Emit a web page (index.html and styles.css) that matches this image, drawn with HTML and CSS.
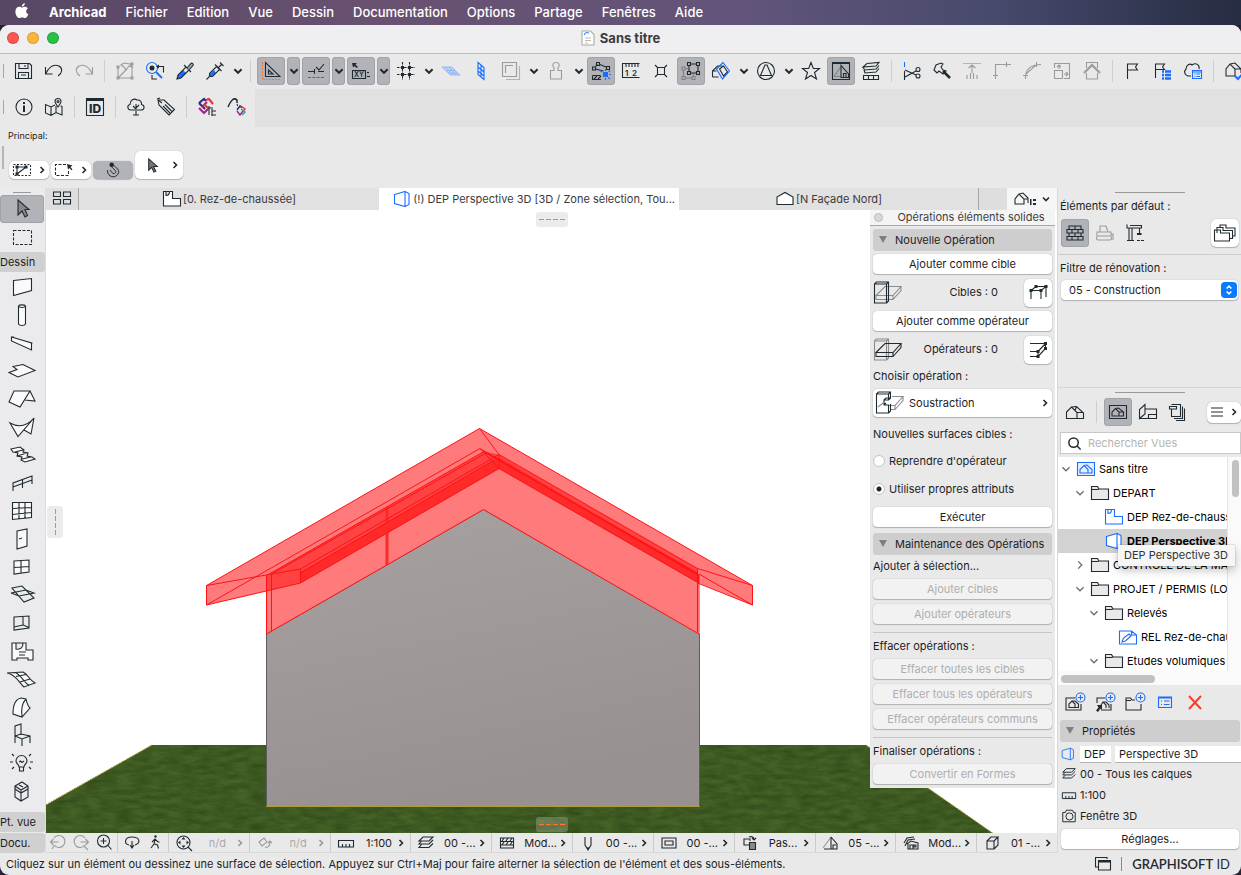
FILE: index.html
```html
<!DOCTYPE html>
<html lang="fr">
<head>
    <meta charset="UTF-8">
    <meta name="viewport" content="width=device-width, initial-scale=1.0">
    <title>Sans titre - Archicad</title>
    <link rel="stylesheet" href="styles.css">
</head>
<body>
    <!-- Icônes réutilisées -->
    <svg class="sprite" aria-hidden="true">
        <symbol id="down" viewBox="0 0 10 10"><path d="M2 3.500l3 3 3-3"/></symbol>
        <symbol id="right" viewBox="0 0 10 10"><path d="M3.500 2l3 3-3 3"/></symbol>
        <symbol id="folder" viewBox="0 0 20 18"><path d="M1.500 2.500h6l1.500 2.500h9.500v10.500H1.500z" fill="#e9e9e9"/><path d="M1.500 5.500h6l1.500-.5"/></symbol>
        <symbol id="layers" viewBox="0 0 18 18"><path d="M6 3h10l-4 4H2zM4.500 7L2 10h10l4-4M4.500 10.500L2 13.500h10l4-4"/></symbol>
        <symbol id="ruler" viewBox="0 0 18 18"><path d="M1.500 6.500h15v6.500h-15zM5.500 10v3M9 10v3M12.500 10v3"/></symbol>
        <symbol id="persp" viewBox="0 0 18 18"><path d="M1.500 4.500L12 1.500v15L1.500 13.500zM12 1.500l4 2v11l-4 2"/></symbol>
        <symbol id="plan" viewBox="0 0 20 18"><path d="M1.500 1.500h9v7h8v7.500h-17zM4 1.500v4c2 0 3.500-1.500 3.500-4"/></symbol>
        <symbol id="house" viewBox="0 0 20 20"><path d="M1.500 16.500V10l5-5 5.500 5.500v6zM6.500 5l5-.5 7 6.500v5.500H12M12 10.500h6.500M10 8.500l1.500-4"/></symbol>
        <symbol id="layout" viewBox="0 0 20 20"><path d="M1.500 16.500v-9l5.500-5v9.500zM7 6h0M7 7h11.500v9.500h-17M10.500 16.500v-4h8"/></symbol>
        <symbol id="cubeA" viewBox="0 0 30 26"><path d="M1.500 4h12v19h-12zM1.500 4l2-2h12v19l-2 2M13.500 4l2-2"/></symbol>
        <symbol id="slab" viewBox="0 0 30 26"><path d="M3 15.500L12 6.500h16l-8 9zM3 15.500v4h17v-4M20 19.500l8-9v-4"/></symbol>
    </svg>

    <header class="menubar">
        <svg class="apple" viewBox="0 0 16 18"><path d="M8 5c1-.6 2-1 3.200-.9 1.300.1 2.300.7 2.900 1.600-2.500 1.600-2.100 5 .6 6.100-.6 1.800-2 4.200-3.500 4.200-1.100 0-1.600-.7-3-.7s-1.900.7-3 .7C3.100 16 1 12.400 1 9.200 1 6 3 4.100 5.100 4.100 6.300 4.100 7.200 4.800 8 5zM7.800 3.900c0-1.900 1.300-3.500 3.200-3.800.2 2-1.400 3.800-3.200 3.800z"/></svg>
        <nav>
            <a href="#" class="app">Archicad</a>
            <a href="#">Fichier</a>
            <a href="#">Edition</a>
            <a href="#">Vue</a>
            <a href="#">Dessin</a>
            <a href="#">Documentation</a>
            <a href="#">Options</a>
            <a href="#">Partage</a>
            <a href="#">Fenêtres</a>
            <a href="#">Aide</a>
        </nav>
    </header>

    <div class="window">
        <div class="titlebar">
            <div class="lights">
                <button class="close" aria-label="Fermer"></button>
                <button class="mini" aria-label="Réduire"></button>
                <button class="full" aria-label="Agrandir"></button>
            </div>
            <svg class="doc" viewBox="0 0 14 16"><path d="M1 1h8.500L13 4.500V15H1z" fill="#fff" stroke="#aaa"/><path d="M3 5c1-2 3-3 5-2" stroke="#2d7ff9" fill="none"/><path d="M4 8h6M4 10.500h6M4 13h3" stroke="#bbb"/></svg>
            <h1>Sans titre</h1>
        </div>

        <div class="toolbar">
            <span class="grip"></span>
            <button class="tb" aria-label="Enregistrer"><svg viewBox="0 0 20 20"><path d="M1.500 2.500h14l2 2v13h-16zM5 2.500v5h9v-5M4.500 17.500v-6h10v6M7 14h5M11 4v2"/></svg></button>
            <button class="tb" aria-label="Annuler"><svg viewBox="0 0 20 20"><path d="M1.500 6v7h7M1.500 13C5 6 10 3 15 5c4 2.500 3.500 7-1 10"/></svg></button>
            <button class="tb dim" aria-label="Rétablir"><svg viewBox="0 0 20 20"><path d="M18.500 6v7h-7M18.500 13C15 6 10 3 5 5 1 7.500 1.500 12 6 15"/></svg></button>
            <span class="sep"></span>
            <button class="tb dim" aria-label="Modifier"><svg viewBox="0 0 20 20"><path d="M3 6v11h14V3h-3M3 17L12 8M6 4l3-2 6 1 2 3-3-1-3 4-2-3z"/><path class="f" d="M1.500 4.500h3v3h-3zM1.500 15.500h3v3h-3zM15.500 15.500h3v3h-3zM15.500 1.500h3v3h-3z"/></svg></button>
            <button class="tb" aria-label="Rechercher"><svg viewBox="0 0 20 20"><circle cx="7" cy="7" r="5.500" class="b"/><path class="b" d="M11 11l6 6" stroke-width="2"/><circle cx="7" cy="7" r="2.500" class="f"/><path d="M14 5.500h4.500v6M7 14v4h5"/><path class="f" d="M14 3.500v4l-3-2z"/></svg></button>
            <button class="tb" aria-label="Pipette"><svg viewBox="0 0 20 20"><path class="bf" d="M2 18l1-4 5-5 3 3-5 5z"/><path d="M2 18l1-4 8-8 3 3-8 8zM9 4l7 7"/><path d="M12 7l4-4.500c1-1 3 .5 2 2L14 9" fill="#9aa"/></svg></button>
            <button class="tb" aria-label="Seringue"><svg viewBox="0 0 20 20"><path class="bf" d="M4 14l5-5 2 3-5 4z"/><path d="M1.500 18.500l3-3v-3l7-7 3 3-7 7h-3M10 3.500l6.500 6.500M13 7l4-4M15 1.500l3.500 3.500"/></svg></button>
            <button class="tb mini-tb" aria-label="Plus"><svg><use href="#down"/></svg></button>
            <span class="sep"></span>
            <button class="tb on" aria-label="Équerre"><svg viewBox="0 0 20 20"><path d="M4.500 1.500v14h14.500zM7.500 9v4h4.500z"/><path d="M1.500 1v17.500h17.500" stroke="#f07b2c" stroke-dasharray="2 1"/></svg></button>
            <button class="tb mini-tb on" aria-label="Options équerre"><svg><use href="#down"/></svg></button>
            <button class="tb on" aria-label="Lignes guides"><svg viewBox="0 0 20 20"><path d="M2 10.500h6M12 10.500h6M8.500 8v5M10 6l3 3 5-6"/><path class="b" d="M2 16.500h16" stroke-dasharray="3 1.300"/></svg></button>
            <button class="tb mini-tb on" aria-label="Options lignes guides"><svg><use href="#down"/></svg></button>
            <button class="tb on" aria-label="Coordonnées"><svg viewBox="0 0 20 20"><path class="f" d="M1 2h5l-1.500 1.500L7 6 5.500 7 3.500 5 2 6.500z"/><path d="M1.500 9.500h13v8h-13zM16 11.500h2M16 15.500h3"/><text x="3" y="16" font-size="7">XY</text></svg></button>
            <button class="tb mini-tb on" aria-label="Options coordonnées"><svg><use href="#down"/></svg></button>
            <button class="tb" aria-label="Trame"><svg viewBox="0 0 20 20"><path d="M1 6.500h18M1 13.500h18M6.500 1v18M13.500 1v18" stroke-dasharray="2.500 1"/><path class="f" d="M5 5h3v3H5zM12 5h3v3h-3zM5 12h3v3H5zM12 12h3v3h-3z"/></svg></button>
            <button class="tb mini-tb" aria-label="Options trame"><svg><use href="#down"/></svg></button>
            <button class="tb" aria-label="Plan d'édition"><svg viewBox="0 0 20 20"><path class="lb" d="M1.500 6h9l8 8h-9zM5 9.500h9M4.500 6l8 8M7.500 6l8 8M7 12h9"/></svg></button>
            <button class="tb" aria-label="Plan vertical"><svg viewBox="0 0 20 20"><path class="b" d="M7 1.500l6 5v12l-6-5zM7 6l6 5M7 10l6 5M10 4v12"/></svg></button>
            <button class="tb dim" aria-label="Calque de référence"><svg viewBox="0 0 20 20"><path class="lb" d="M5 18.500h13.500V5"/><path d="M1.500 1.500h14v14h-14zM4.500 12V4.500H12"/></svg></button>
            <button class="tb mini-tb" aria-label="Options référence"><svg><use href="#down"/></svg></button>
            <button class="tb dim" aria-label="Tampon"><svg viewBox="0 0 20 20"><path d="M4.500 9.500h3.500V7C5.500 4.500 7 1.500 10 1.500S14.500 4.500 12 7v2.500h3.500V18h-11z"/></svg></button>
            <button class="tb mini-tb" aria-label="Options tampon"><svg><use href="#down"/></svg></button>
            <button class="tb on" aria-label="Accrochage"><svg viewBox="0 0 20 20"><path d="M4.500 5.500l2-2M9 3.500l7 3M4.500 8l8 2"/><path d="M1.500 6h3v3h-3zM5.500 1.500h3v3h-3zM15.500 5.500h3v3h-3zM1.500 14.500h8M10 18.500H1.500v-4M3 18l3-3M7 18l3-3"/><path class="bf" d="M12 11h5v5h-5z"/><path class="b" d="M9 9.500l2 1.500M14.500 8v2M19 9.500l-1.500 1.500M20 13.500h-2M19 18l-2-1.500M14.500 19v-2"/></svg></button>
            <button class="tb" aria-label="Mesure"><svg viewBox="0 0 20 20"><path d="M18.500 2.500h-17v14h17M5 3v3M8 3v3M11 3v3M14 3v3M17 3v3"/><text x="4" y="15" font-size="8">1</text><text x="11" y="15" font-size="8">2</text></svg></button>
            <button class="tb" aria-label="Éclater"><svg viewBox="0 0 20 20"><path d="M6.500 6.500h7v7h-7zM4 4l3 3M16 4l-3 3M4 16l3-3M16 16l-3-3"/></svg></button>
            <button class="tb on" aria-label="Groupes"><svg viewBox="0 0 20 20"><path d="M2.500 9v7M3.500 17h8M4 7.500h3M12.500 12v4" stroke="#808287"/><path d="M1 6h3v3H1zM1 15.500h3v3H1zM11 15.500h3v3h-3z" stroke="#808287"/><path d="M8 3h9v9H8z"/><path d="M6.500 1.500h3v3h-3zM15.500 1.500h3v3h-3zM15.500 10.500h3v3h-3zM6.500 10.500h3v3h-3z" fill="#b2b3b8"/></svg></button>
            <button class="tb" aria-label="Coupe 3D"><svg viewBox="0 0 20 20"><path d="M1.500 16V10l5-5h5M1.500 16h6M1.500 10h4"/><path class="b" d="M12 1.500L5.500 8l6 10L18.500 10z"/><path d="M8.500 8l4-3 4 6-4 4z"/></svg></button>
            <button class="tb mini-tb" aria-label="Options coupe"><svg><use href="#down"/></svg></button>
            <button class="tb" aria-label="Cercle"><svg viewBox="0 0 20 20"><circle cx="10" cy="10" r="8.500"/><path d="M9 4h2l4.500 10.500h-11z"/></svg></button>
            <button class="tb mini-tb" aria-label="Options cercle"><svg><use href="#down"/></svg></button>
            <button class="tb" aria-label="Favoris"><svg viewBox="0 0 20 20"><path d="M10 1.500l2.300 6h6.200l-5 4 2 6.500L10 14.500 4.500 18l2-6.500-5-4h6.200z"/></svg></button>
            <button class="tb on" aria-label="Aperçu"><svg viewBox="0 0 20 20"><path d="M1.500 1.500h17v17h-17z"/><path d="M3 15.500L9.500 6M3 15.500h7" stroke="#808287"/><path class="f" d="M1 1h18v2H1z"/><path d="M10 4.500v12h7.500V13zM12.500 16.500v-4H15v4"/></svg></button>
            <button class="tb" aria-label="Calques"><svg viewBox="0 0 20 20"><path d="M6 2.500l12-1-3 3.500L2 6zM2 6l1.500 3L15 8l3-3.500M3 9l1 3 11-1 3-3.500M2.500 14.500h15v4h-15zM7.500 14v4M12.500 14v4"/></svg></button>
            <span class="sep"></span>
            <button class="tb" aria-label="Scinder"><svg viewBox="0 0 20 20"><path class="b" d="M2.500 1v5"/><path d="M2.500 10v9M3 9l11 5M3 16l11-6"/><circle cx="16" cy="8.500" r="2"/><circle cx="16" cy="15" r="2"/></svg></button>
            <button class="tb" aria-label="Ajuster"><svg viewBox="0 0 20 20"><path d="M2 9l2-5 5-2 2 1-2 3 2 3 3 1-3 3-4-3-2 2z"/><path d="M11 10l7 7" stroke-width="2.500"/></svg></button>
            <button class="tb dim" aria-label="Élever"><svg viewBox="0 0 20 20"><path class="lb" d="M1 2.500h18"/><path d="M10 12V4M6.500 7L10 4l3.500 3M5 18v-4M8.500 18v-6M11.500 18v-6M15 18v-4"/></svg></button>
            <button class="tb dim" aria-label="Angle"><svg viewBox="0 0 20 20"><path d="M3.500 18V3.500H19M1 14.500h5M14.500 1v5"/></svg></button>
            <button class="tb dim" aria-label="Raccord"><svg viewBox="0 0 20 20"><path d="M3.500 18C3 9 8 3.500 19 3.500M1 14.500h5M14.500 1v5M4 13L14 4"/></svg></button>
            <button class="tb dim" aria-label="Redimensionner"><svg viewBox="0 0 20 20"><path d="M2.500 7V2.500h15v15H12M2.500 9.500h8v8h-8zM7 8V4M5 6l2-2 2 2M12 13h4M14 11l2 2-2 2"/></svg></button>
            <button class="tb dim" aria-label="Toit"><svg viewBox="0 0 20 20"><path d="M4.500 7V1.500h11V7M4.500 12v6h11v-6"/><path d="M2 12l8-8 8 8" stroke-width="2.200"/></svg></button>
            <span class="sep"></span>
            <button class="tb" aria-label="Drapeau"><svg viewBox="0 0 20 20"><path d="M4.500 18V3h10l-2 3 2 3h-10"/></svg></button>
            <button class="tb" aria-label="Liste de révisions"><svg viewBox="0 0 20 20"><path d="M2.500 17V3h9l-2 3 2 2.500h-9"/><path class="b" d="M9 10.500h2M12 10.500h6M9 14h2M12 14h6M9 17.500h2M12 17.500h6" stroke-width="2.600"/></svg></button>
            <button class="tb" aria-label="BIMcloud"><svg viewBox="0 0 20 20"><path d="M8 15H5c-4-1-4-5-2-7 0-4 4-6 6-4 4-3 8 0 7 4"/><path class="b" d="M9.500 9.500h9v8h-9zM9.500 11h9M11.500 13h1M13.500 13h3.500M11.500 15.500h1M13.500 15.500h3.500"/></svg></button>
            <span class="sep"></span>
            <button class="tb" aria-label="Vérifier"><svg viewBox="0 0 20 20"><path d="M2 15V8l4-5 5 5v7zM6 3l5-1 6 6v4M11 8h6"/><path class="b" d="M11 15l3 3 6-7" stroke-width="2"/></svg></button>
        </div>

        <div class="toolbar second">
            <div class="group">
                <span class="grip"></span>
                <button class="tb" aria-label="Informations"><svg viewBox="0 0 20 20"><circle cx="10" cy="10" r="8"/><path class="f" d="M9 5h2v2H9zM9 8.500h2V15H9z"/></svg></button>
                <button class="tb" aria-label="Carte"><svg viewBox="0 0 20 20"><path d="M11 8l-4 2-5.500-2.500V16L7 18.500l5-3 6 2.500V9.500L16.500 9M7 10v8.500M12 9v6.500M14 10c-2-3-3-4-3-5.500a3 3 0 016 0C17 6 16 7 14 10z"/><circle cx="14" cy="4.500" r="1"/></svg></button>
                <span class="sep"></span>
                <button class="tb" aria-label="Gestionnaire d'ID"><svg viewBox="0 0 20 20"><path d="M1.500 1.500h17v17h-17z"/><path class="f" d="M1 1h18v3H1z"/><text class="id" x="4" y="15.500" font-size="12">ID</text></svg></button>
                <span class="sep"></span>
                <button class="tb" aria-label="Arbre"><svg viewBox="0 0 20 20"><path d="M9 13H5c-4 0-4-5-1-5.500C4 3 8 1 11 3c3-.5 5 2 4.500 4.500C19 8 19 13 15 13h-4M10 7v11M7 18h6M10 12L7 9M10 11l3-3"/></svg></button>
                <button class="tb" aria-label="Étiquette"><svg viewBox="0 0 20 20"><path d="M2 3l1 5 10 10 5.500-5.500L8 3zM7 9l7 7M9 7.500l7 7"/><path d="M2 3l4 3M1 2l3-1"/></svg></button>
                <span class="sep"></span>
                <button class="tb" aria-label="Classification"><svg viewBox="0 0 20 20"><g stroke-width="2.200"><path d="M2 6l5-4 2 2" stroke="#2b2f7f"/><path d="M9 3l3-1 4 5" stroke="#e6364e"/><path d="M2 6l6 6" stroke="#2b2f7f"/><path d="M2 11l5 5 4-4M10 5L5 10" stroke="#a32688"/><path d="M7 7l5 5" stroke="#e6364e"/></g><path d="M12 9v9M12 11h4M15 12v7M15 14h4M15 18h4"/></svg></button>
                <button class="tb" aria-label="Courbe"><svg viewBox="0 0 20 20"><path d="M1 10C4 3 7 0 10 3v3" stroke-width="1.500"/><path d="M10 7l1 3" stroke-dasharray="2 1"/><g stroke-width="1.500"><path d="M10 13l3-4 2 2" stroke="#2b2f7f"/><path d="M14 9l4 3-2 2" stroke="#e6364e"/><path d="M10 14l3 4 3-4" stroke="#a32688"/><path d="M15 18l3-3-4-3" stroke="#2aa198"/></g></svg></button>
            </div>
        </div>

        <div class="infobox">
            <p>Principal:</p>
            <div class="info-row">
                <button class="pill" aria-label="Sélection de zone"><svg class="wide" viewBox="0 0 20 14"><path d="M1.500 1.500h17v11h-17z" stroke-dasharray="2 1.500"/><path d="M5 3v8M5 11l9-7M5 4h8"/><path class="f" d="M3.500 2.500h3v3h-3zM3.500 9.500h3v3h-3zM12.500 2.500h3v3h-3z"/></svg><svg class="chev"><use href="#right"/></svg></button>
                <button class="pill" aria-label="Méthode de sélection"><svg class="wide" viewBox="0 0 20 14"><path d="M12 1.500H1.500v11h13V8" stroke-dasharray="3 1.500"/><path class="f" d="M13 1l5.500 1.500-2 1.500 2 2.500-1 .7-2-2.200L14 6.500z"/></svg><svg class="chev"><use href="#right"/></svg></button>
                <button class="pill on" aria-label="Aimant"><svg viewBox="0 0 18 18"><path d="M3 9c-1 6 5 9 9 7 5-3 4-8 0-10L9 3 7 5l4 4c2 2 1 4-1 4-2 0-3-2-4-4"/><circle cx="7.500" cy="3" r="2.500" class="f"/></svg></button>
                <button class="pill big" aria-label="Flèche"><svg viewBox="0 0 18 18"><path d="M5 2v12l3-3 2.500 5 2-1-2.500-5h4z" fill="#777"/></svg><svg class="chev"><use href="#right"/></svg></button>
            </div>
        </div>

        <div class="workspace">
            <aside class="toolbox">
                <span class="handle"></span>
                <button class="tool on" aria-label="Flèche"><svg viewBox="0 0 30 28"><path d="M11 5v15l4-4 3 6 2.500-1.500-2.500-6h4z" fill="#888"/></svg></button>
                <button class="tool" aria-label="Rectangle de sélection"><svg viewBox="0 0 30 28"><path d="M6.500 7.500h18v14h-18z" stroke-dasharray="3 1.500"/></svg></button>
                <h2 class="first">Dessin</h2>
                <button class="tool" aria-label="Mur"><svg viewBox="0 0 30 28"><path class="w" d="M6.500 7.500l18-2v12l-18 5z"/></svg></button>
                <button class="tool" aria-label="Poteau"><svg viewBox="0 0 30 28"><path class="w" d="M11.500 5v18c1 2 6 2 7 0V5c-1-1.500-6-1.500-7 0zM11.500 5c1 2 6 2 7 0"/></svg></button>
                <button class="tool" aria-label="Poutre"><svg viewBox="0 0 30 28"><path class="w" d="M4.500 8l20 6v7l-20-9zM4 8h3M23.500 14h2"/></svg></button>
                <button class="tool" aria-label="Dalle"><svg viewBox="0 0 30 28"><path class="w" d="M2 15.500l8-3-4-3 10-2 12 6-17 6.500z"/></svg></button>
                <button class="tool" aria-label="Toit"><svg viewBox="0 0 30 28"><path class="w" d="M7 6h16L13 22 2 17zM23 6l5 10-10-1"/></svg></button>
                <button class="tool" aria-label="Coque"><svg viewBox="0 0 30 28"><path class="w" d="M3 10c9 5 17 3 24-5L11 23.500zM27 5l-3 16-7-4"/></svg></button>
                <button class="tool" aria-label="Escalier"><svg viewBox="0 0 30 28"><path class="w" d="M4 8l9-2 4 3-1 2 5 1-1 3 5 1 3 2-10 3-4-2 1-3-5-1 1-3-5-1zM8 11l8-2M10 15l10-3M15 18l9-2"/></svg></button>
                <button class="tool" aria-label="Garde-corps"><svg viewBox="0 0 30 28"><path d="M6 22v-8l19-7v8M15.500 19v-8M6 18l19-7"/></svg></button>
                <button class="tool" aria-label="Mur-rideau"><svg viewBox="0 0 30 28"><path class="w" d="M5.500 5.500h19v15l-19 2zM5.500 11.500l19-1M5.500 17.500l19-2M12 6v16M18 6v15"/></svg></button>
                <button class="tool" aria-label="Porte"><svg viewBox="0 0 30 28"><path class="w" d="M10 6l10-2v17l-10 3zM12 14l3-1"/></svg></button>
                <button class="tool" aria-label="Fenêtre"><svg viewBox="0 0 30 28"><path class="w" d="M7 8l15-1v12l-15 2zM7 14.500l15-1M14 8v12"/></svg></button>
                <button class="tool" aria-label="Lucarne"><svg viewBox="0 0 30 28"><path d="M5 7l10-2 12 12-10 4zM4 12l8 3 15-3-8-3-15 3"/></svg></button>
                <button class="tool" aria-label="Ouverture"><svg viewBox="0 0 30 28"><path d="M7 8l15-1v12l-15 2zM16 7.500v8.500l6 2.500M7 18l9-2"/></svg></button>
                <button class="tool" aria-label="Zone"><svg viewBox="0 0 30 28"><path class="w" d="M5 6h4v6c5 1 7-2 7-6h3v7h7v10h-5v-2H10v2H5zM9 6h7M12 15h7M12 18h6"/></svg></button>
                <button class="tool" aria-label="Maillage"><svg viewBox="0 0 30 28"><path class="w" d="M0 8l16-1c5 2 6 8 12 11l-11 4C12 18 10 10 0 8zM9 11.500l10-2M13 17l10-3M8 7.500c6 2 8 9 14 13"/></svg></button>
                <button class="tool" aria-label="Forme"><svg viewBox="0 0 30 28"><path class="w" d="M6 21C6 11 9 6 14 5l5 1c1 5 2 7 4 9l-8 9zM15 24c-1-8 0-14 4-18"/></svg></button>
                <button class="tool" aria-label="Objet"><svg viewBox="0 0 30 28"><path d="M8 22V5l6-2v11M8 15l6-2 9 2v7M8 15l7 3 8-3M15 18v7"/></svg></button>
                <button class="tool" aria-label="Lampe"><svg viewBox="0 0 30 28"><path d="M12 18c0-3-3-3-3-6a5.500 5.500 0 0111 0c0 3-3 3-3 6zM12.500 18v4h4v-4M12 13l1.500-1 1.500 1.500 2-1.500M7 7L5 5M22 7l2-2M6 13H3M26 13h-3M7 18l-2 2M22 18l2 2"/></svg></button>
                <button class="tool" aria-label="Équipement"><svg viewBox="0 0 30 28"><path d="M8 9l7-4 6 4v11l-7 4-6-4zM8 9l6 4 7-4M14 13v11M8 12l6 4 7-4M12 8l4 2"/></svg></button>
                <h2 class="bottom">Pt. vue</h2>
                <h2>Docu.</h2>
            </aside>

            <main class="center">
                <div class="tabs">
                    <button class="grid-btn" aria-label="Vue d'ensemble"><svg viewBox="0 0 20 16"><path d="M1.500 2h7v4.500h-7zM11.500 2h7v4.500h-7zM1.500 9.500h7V14h-7zM11.500 9.500h7V14h-7z"/></svg></button>
                    <a href="#" class="tab"><svg><use href="#plan" fill="#fff"/></svg>[0. Rez-de-chaussée]</a>
                    <a href="#" class="tab active"><svg class="b"><use href="#persp"/></svg>(!) DEP Perspective 3D [3D / Zone sélection, Tou...</a>
                    <a href="#" class="tab"><svg viewBox="0 0 20 18"><path d="M2 14.500V7l8-4.500L18 7v7.500z" fill="#fff"/></svg>[N Façade Nord]</a>
                    <button class="nav-btn" aria-label="Navigateur"><svg viewBox="0 0 24 18"><path d="M2 14V9l4-5 5 5v5zM6 4l4-1 5 5v5M11 9h4"/><path class="f" d="M17 9h1.500v6H17zM20 9h3v2h-3zM20 13h3v2h-3z"/></svg><svg class="chev"><use href="#down"/></svg></button>
                </div>

                <div class="canvas">
                    <svg class="scene" viewBox="46 210 1011 623" preserveAspectRatio="xMidYMid slice" role="img" aria-label="Vue 3D de la maison">
                        <defs>
                            <filter id="grass" x="0" y="0" width="100%" height="100%" color-interpolation-filters="sRGB">
                                <feTurbulence type="fractalNoise" baseFrequency="0.06 0.2" numOctaves="4" seed="4"/>
                                <feColorMatrix values="0.12 0 0 0 0.180  0.14 0 0 0 0.280  0.08 0 0 0 0.090  0 0 0 0 1"/>
                                <feComposite in2="SourceGraphic" operator="in"/>
                            </filter>
                            <linearGradient id="wall" x1="0" y1="0" x2="0.300" y2="1">
                                <stop offset="0" stop-color="#a7a2a1"/>
                                <stop offset="1" stop-color="#979291"/>
                            </linearGradient>
                        </defs>
                        <path d="M0 831L152 745H866L994 834H0z" fill="#3c5821" filter="url(#grass)"/>
                        <path d="M40 808L152 745M866 745L994 834" stroke="#a5962c" fill="none" stroke-dasharray="2 1"/>
                        <path d="M266.500 634L483.500 509.500L699.500 634V806.500H266.500z" fill="url(#wall)" stroke="#5d5d60"/>
                        <path d="M266 806.500H700" stroke="#b09a3a"/>
                        <path d="M206.500 585.500L479.500 428.500L752.500 585.500V605L698.500 583V634L483.500 509.500L266.500 634V591L206.500 605z" fill="#ff7b7b"/>
                        <path d="M266.500 575.500L484 451.500L499 454.500L697.500 568.500V583L499 468.500L300.500 583L266.500 591z" fill="#ff4242"/>
                        <path d="M300.500 572L499 457.500L699 575V583L499 468.500L300.500 583z" fill="#ff2a2a"/>
                        <path d="M387 507V565" stroke="#ff2a2a" stroke-width="3"/>
                        <g fill="none" stroke="#ff1217">
                            <path d="M206.500 605V585.500L479.500 428.500L752.500 585.500V605L697.500 583"/>
                            <path d="M206.500 585.500L300.500 569V583L206.500 605L480 448.500L499 468.500V454.500L479.500 428.500"/>
                            <path d="M266.500 634V575.500L484 451.500L699 575M271.500 631V574L486 453L697.500 573"/>
                            <path d="M300.500 569L499 454.500L697.500 568.500L752.500 585.500M300.500 573L494 460M699 574L752.500 605"/>
                            <path d="M480 448.500L699 576M300.500 583L499 468.500L699 583"/>
                            <path d="M266.500 634L483.500 509.500L699 634V575M697.500 568.500V632"/>
                        </g>
                    </svg>
                    <span class="pull top"></span>
                    <span class="pull left"></span>
                    <span class="pull foot"></span>

                    <section class="palette">
                        <header><button class="dot" aria-label="Fermer la palette"></button><h2>Opérations éléments solides</h2></header>
                        <div class="palette-body">
                            <h3 class="fold">Nouvelle Opération</h3>
                            <button class="btn">Ajouter comme cible</button>
                            <div class="count-row">
                                <svg class="solid" viewBox="0 0 30 26"><g stroke="#8c8c8c"><use href="#slab"/></g><use href="#cubeA"/></svg>
                                <span>Cibles : 0</span>
                                <button class="sq" aria-label="Sélectionner les cibles"><svg viewBox="0 0 20 20"><path d="M3 7.500V16M13 7.500V16M18 3.500V14M3 7.500l5-4h10l-5 4z"/><path class="f" d="M1.500 6h3v3h-3zM6.500 2h3v3h-3zM16.500 2h3v3h-3zM11.500 6h3v3h-3z"/></svg></button>
                            </div>
                            <button class="btn">Ajouter comme opérateur</button>
                            <div class="count-row">
                                <svg class="solid" viewBox="0 0 30 26"><g stroke="#8c8c8c"><use href="#cubeA"/></g><use href="#slab"/></svg>
                                <span>Opérateurs : 0</span>
                                <button class="sq" aria-label="Sélectionner les opérateurs"><svg viewBox="0 0 20 20"><path d="M2 3.500h15M2 11.500h8M2 16.500h8M10 11.500l7.500-8v5l-7.500 8z"/><path class="f" d="M16 2h3v3h-3zM8.500 10h3v3h-3zM8.500 15h3v3h-3zM16 7h3v3h-3z"/></svg></button>
                            </div>
                            <p>Choisir opération :</p>
                            <button class="btn pick"><svg class="solid" viewBox="0 0 30 26"><path stroke="#8c8c8c" d="M14 15.500h6l8-9H17M20 15.500v4h-5M20 19.500l8-9v-4M3 17l5-4"/><path d="M1.500 4l2-2h12v6l-2 2M1.500 4h12v6H9v5h4.500v8h-12zM13.500 4l2-2M15.500 14v7l-2 2M9 10l2-2h4.500M9 15l2-2"/></svg><span>Soustraction</span><svg class="chev"><use href="#right"/></svg></button>
                            <p class="spaced">Nouvelles surfaces cibles :</p>
                            <label class="radio"><input type="radio" name="surf"> Reprendre d'opérateur</label>
                            <label class="radio"><input type="radio" name="surf" checked> Utiliser propres attributs</label>
                            <button class="btn run">Exécuter</button>
                            <h3 class="fold">Maintenance des Opérations</h3>
                            <p>Ajouter à sélection...</p>
                            <button class="btn" disabled>Ajouter cibles</button>
                            <button class="btn" disabled>Ajouter opérateurs</button>
                            <hr>
                            <p>Effacer opérations :</p>
                            <button class="btn" disabled>Effacer toutes les cibles</button>
                            <button class="btn" disabled>Effacer tous les opérateurs</button>
                            <button class="btn" disabled>Effacer opérateurs communs</button>
                            <hr>
                            <p>Finaliser opérations :</p>
                            <button class="btn" disabled>Convertir en Formes</button>
                        </div>
                    </section>
                </div>

                <div class="quickbar">
                    <div class="nav-group">
                        <button class="dim" aria-label="Zoom précédent"><svg viewBox="0 0 18 18"><path d="M5 5a6 6 0 110 7M1.500 9h8M4.500 6l-3 3 3 3M5 13l-2 3"/></svg></button>
                        <button class="dim" aria-label="Zoom suivant"><svg viewBox="0 0 18 18"><path d="M13 5a6 6 0 100 7M16.500 9h-8M13.500 6l3 3-3 3M12 13l4 4"/></svg></button>
                        <button aria-label="Zoom"><svg viewBox="0 0 18 18"><circle cx="8.500" cy="8" r="6"/><path d="M8.500 5v6M5.500 8h6M13 12.500l3.500 4"/></svg></button>
                    </div>
                    <div class="nav-group">
                        <button aria-label="Orbite"><svg viewBox="0 0 18 18"><path d="M6 12C1 11 1 4 9 4s9 6 3 8M9 8v6M7 12l2 3 2-3"/></svg></button>
                        <button aria-label="Explorer"><svg viewBox="0 0 18 18"><circle cx="9.500" cy="3.500" r="1.200" class="f"/><path d="M9 6L8 11l-3 4M8.500 11l3 1 1 3.500M6 9l3-3 3 3h1.500"/></svg></button>
                    </div>
                    <button class="cell off"><svg viewBox="0 0 18 18"><circle cx="8.500" cy="8.500" r="6.500"/><path d="M13 13l4 4"/><path class="f" d="M8.500 3l2 2.500h-4zM8.500 14l2-2.500h-4zM3 8.500l2.500-2v4zM14 8.500l-2.500-2v4z"/></svg><span>n/d</span><svg class="chev"><use href="#right"/></svg></button>
                    <button class="cell off"><svg class="dim" viewBox="0 0 18 18"><path d="M3 8l5-4 3 4-5 4zM9 13c3 1 5-1 5-5M12 9l2-2 2 2"/></svg><span>n/d</span><svg class="chev"><use href="#right"/></svg></button>
                    <button class="cell"><svg><use href="#ruler"/></svg><span>1:100</span><svg class="chev"><use href="#right"/></svg></button>
                    <button class="cell"><svg><use href="#layers"/></svg><span>00 -...</span><svg class="chev"><use href="#right"/></svg></button>
                    <button class="cell"><svg viewBox="0 0 18 18"><path d="M2.500 4h13v10h-13zM2.500 7.500h13M2.500 11h13M4 7l2-3M8 7l2-3M12 7l2-3M4 11l2-3M8 11l2-3M12 11l2-3"/></svg><span>Mod...</span><svg class="chev"><use href="#right"/></svg></button>
                    <button class="cell"><svg viewBox="0 0 18 18"><path d="M6 3v8l3 5 3-5V3M9 13v3"/></svg><span>00 -...</span><svg class="chev"><use href="#right"/></svg></button>
                    <button class="cell"><svg viewBox="0 0 18 18"><path d="M2 4h14v10H2zM5 7h8v4H5z"/></svg><span>00 -...</span><svg class="chev"><use href="#right"/></svg></button>
                    <button class="cell"><svg viewBox="0 0 18 18"><path d="M8 11H3V5h6v2M8 3c3-1 5 0 5 3M11 4l2 2 2-2"/><path d="M8.500 8.500h6v7h-6z" fill="#888"/></svg><span>Pas...</span><svg class="chev"><use href="#right"/></svg></button>
                    <button class="cell"><svg viewBox="0 0 18 18"><path d="M1 14L9 3" stroke="#999"/><path d="M9 3l6 7v5H2M9 3v12M11 15v-4h3"/></svg><span>05 -...</span><svg class="chev"><use href="#right"/></svg></button>
                    <button class="cell"><svg viewBox="0 0 18 18"><path d="M2 9l3-5 7-1M3 12l3-6 7-1M5 10l4-3 7 2v6H6v-5M8 15v-4h3v4M12 11h2v2h-2z"/></svg><span>Mod...</span><svg class="chev"><use href="#right"/></svg></button>
                    <button class="cell"><svg viewBox="0 0 18 18"><path d="M4 7h7v8H4zM4 7l4-4h7l-4 4M15 3v8l-4 4"/></svg><span>01 -...</span><svg class="chev"><use href="#right"/></svg></button>
                </div>
            </main>

            <aside class="side">
                <span class="handle long"></span>
                <p class="side-label">Éléments par défaut :</p>
                <div class="side-row">
                    <button class="tb on" aria-label="Existant"><svg viewBox="0 0 20 20"><path d="M4 3h12v3.500H4zM2 6.500h16V10H2zM4 10h12v3.500H4zM2 13.500h16V17H2zM10 3v3.500M7 6.500V10M13 6.500V10M10 10v3.500M7 13.500V17M13 13.500V17"/></svg></button>
                    <button class="tb dim" aria-label="À démolir"><svg viewBox="0 0 20 20"><path d="M5 9V3h6l2 6M2 13V9h14v4M3 13h12c2 0 2 4 0 4H3c-2 0-2-4 0-4zM16 11h2v6"/></svg></button>
                    <button class="tb" aria-label="Nouveau"><svg viewBox="0 0 20 20"><path d="M4 17V5M7 17V5M2 17.500h7M2 1.500v3.500h14.500V2.500H5M14.500 5v5M12.500 10.500h3.500v1h-3.500zM12 17.500h3M16 17.500h3"/></svg></button>
                    <button class="sq end" aria-label="Vues"><svg viewBox="0 0 24 20"><path d="M1.500 7h6v3h9v8h-15zM4 7V4.500h6v3h9.500v8h-3M7 4.500V2h6v3h9v8h-2.500M4 10V7"/></svg></button>
                </div>
                <div class="filter">
                    <label for="reno">Filtre de rénovation :</label>
                    <div class="select">
                        <select id="reno"><option>05 - Construction</option></select>
                        <svg viewBox="0 0 16 18"><path d="M5 7l3-3 3 3M5 11l3 3 3-3"/></svg>
                    </div>
                </div>

                <div class="navigator">
                    <span class="handle long"></span>
                    <div class="side-row maps">
                        <button class="tb" aria-label="Plan du projet"><svg><use href="#house"/></svg></button>
                        <span class="sep"></span>
                        <button class="tb on" aria-label="Plan des vues"><svg viewBox="0 0 20 20"><path d="M1.500 3.500h17v13h-17zM4 14v-4l3.500-3.500L11 10v4zM7.500 6.500l3-.500 5 4v4H11M11 10h4.500"/></svg></button>
                        <button class="tb" aria-label="Mises en page"><svg><use href="#layout"/></svg></button>
                        <button class="tb" aria-label="Jeux de publication"><svg viewBox="0 0 20 20"><path d="M3.500 7v7.500h9v-12h-9M1.500 4.500h7V7h-7zM14.500 4.500v12H6M16.500 6.500v12H8"/></svg></button>
                        <button class="menu-btn end" aria-label="Menu"><svg viewBox="0 0 16 14"><path d="M2 3h12M2 7h12M2 11h12"/></svg><svg class="chev"><use href="#right"/></svg></button>
                    </div>
                    <div class="search">
                        <svg viewBox="0 0 16 16"><circle cx="7" cy="7" r="5"/><path d="M10.500 10.500l4 4"/></svg>
                        <input type="search" placeholder="Rechercher Vues" aria-label="Rechercher Vues">
                    </div>
                    <div class="tree">
                        <ul>
                            <li class="l0"><svg class="tw"><use href="#down"/></svg><svg class="b" viewBox="0 0 20 18"><path d="M1.500 2.500h17v13h-17zM4 13V9.500L8 5.500l4 4V13zM8 5.500l3-.500 5 4.500V13h-4" fill="#e6efff"/></svg>Sans titre</li>
                            <li class="l1"><svg class="tw"><use href="#down"/></svg><svg><use href="#folder"/></svg>DEPART</li>
                            <li class="l2"><i class="tw"></i><svg class="b"><use href="#plan"/></svg>DEP Rez-de-chaussée</li>
                            <li class="l2 current"><i class="tw"></i><svg class="b wf"><use href="#persp"/></svg>DEP Perspective 3D</li>
                            <li class="l1"><svg class="tw"><use href="#right"/></svg><svg><use href="#folder"/></svg>CONTROLE DE LA MAQUETTE</li>
                            <li class="l1"><svg class="tw"><use href="#down"/></svg><svg><use href="#folder"/></svg>PROJET / PERMIS (LOT)</li>
                            <li class="l2"><svg class="tw"><use href="#down"/></svg><svg><use href="#folder"/></svg>Relevés</li>
                            <li class="l3"><i class="tw"></i><svg class="b" viewBox="0 0 20 18"><path d="M1.500 3h12l5 4v9h-17zM13.500 3v4h5M4 14l1.500-4L11 6l2 2-5.500 5z"/></svg>REL Rez-de-chaussée</li>
                            <li class="l2"><svg class="tw"><use href="#down"/></svg><svg><use href="#folder"/></svg>Etudes volumiques</li>
                        </ul>
                        <div class="vscroll"><span></span></div>
                        <div class="tooltip" role="tooltip">DEP Perspective 3D</div>
                    </div>
                    <div class="hscroll"><span></span></div>
                </div>

                <div class="side-row actions">
                    <button class="tb" aria-label="Nouvelle vue"><svg viewBox="0 0 22 20"><path d="M11 6H2v12h15v-6M5 15.500V12l3-3 3 3v3.500zM8 9h3l3.500 3v3.500H11"/><g class="b"><circle cx="16.500" cy="5.500" r="4.500"/><path d="M16.500 3v5M14 5.500h5"/></g></svg></button>
                    <button class="tb" aria-label="Cloner"><svg viewBox="0 0 22 20"><path d="M11 6H3v5M7 18h10v-6M7 13l2-3 3 3v3M9 10h3l3 3v3"/><path class="f" d="M3 13h5v5l-1.500-1.500L4 20l-2-1.500 2.500-3z"/><g class="b"><circle cx="16.500" cy="5.500" r="4.500"/><path d="M16.500 3v5M14 5.500h5"/></g></svg></button>
                    <button class="tb" aria-label="Nouveau dossier"><svg viewBox="0 0 22 20"><path d="M11 8H8L6.500 6H2v12h15v-6M2 8.500h5"/><g class="b"><circle cx="16.500" cy="5.500" r="4.500"/><path d="M16.500 3v5M14 5.500h5"/></g></svg></button>
                    <button class="tb" aria-label="Réglages de vue"><svg class="b" viewBox="0 0 20 20"><path d="M3.500 5h13v10.500h-13zM3.500 6h13M6 9h1M9 9h5.500M6 12.500h1M9 12.500h5.500"/></svg></button>
                    <button class="tb" aria-label="Supprimer"><svg class="del" viewBox="0 0 20 20"><path d="M4 4l12 13M16 4L4 17"/></svg></button>
                </div>

                <h3 class="fold props-head">Propriétés</h3>
                <div class="props">
                    <div class="prop-inputs">
                        <svg class="b"><use href="#persp"/></svg>
                        <input class="code" type="text" value="DEP" aria-label="Identifiant">
                        <input type="text" value="Perspective 3D" aria-label="Nom">
                    </div>
                    <div class="prop"><svg><use href="#layers"/></svg>00 - Tous les calques</div>
                    <div class="prop"><svg><use href="#ruler"/></svg>1:100</div>
                    <div class="prop"><svg viewBox="0 0 18 18"><path d="M2 5h3l1-2.500h7L14 5h2v10.500H2z"/><circle cx="9.500" cy="9.500" r="4"/></svg>Fenêtre 3D</div>
                    <button class="btn">Réglages...</button>
                </div>
            </aside>
        </div>

        <footer class="status">
            <p>Cliquez sur un élément ou dessinez une surface de sélection. Appuyez sur Ctrl+Maj pour faire alterner la sélection de l'élément et des sous-éléments.</p>
            <svg viewBox="0 0 18 16"><path d="M13 3V1.500H1.500V11H4M4.500 4.500h12v9.500h-12z"/><path class="f" d="M4 4h13v2.500H4z"/></svg>
            <span class="bar"></span>
            <div class="brand"><b>GRAPHISOFT</b> ID</div>
        </footer>
    </div>
</body>
</html>
```

FILE: styles.css
```css
* {
    box-sizing: border-box;
}

body {
    margin: 0;
    height: 100vh;
    display: flex;
    flex-direction: column;
    overflow: hidden;
    font-family: Inter, "Liberation Sans", sans-serif;
    font-size: 11px;
    color: #1d1d1f;
    background: #2c2035;
}

h1, h2, h3, p, ul {
    margin: 0;
    padding: 0;
    font-size: 11px;
    font-weight: 400;
}

a {
    color: inherit;
    text-decoration: none;
}

button {
    font: inherit;
    color: inherit;
    padding: 0;
    border: none;
    background: none;
}

/* Icônes */
svg {
    width: 20px;
    height: 20px;
    flex: none;
    fill: none;
    stroke: #1f2b31;
    stroke-width: 1.1;
}

svg text {
    fill: #1f2b31;
    stroke: none;
    font-weight: 600;
}

svg .id {
    font-weight: 800;
}

.sprite {
    position: absolute;
    width: 0;
    height: 0;
}

.f {
    fill: #1f2b31;
    stroke: none;
}

.b {
    stroke: #1a6dff;
}

.bf {
    fill: #1a6dff;
    stroke: none;
}

.lb {
    stroke: #8fb8f5;
}

.dim svg, svg.dim {
    stroke: #9b9b9d;
}

.dim .f {
    fill: #9b9b9d;
}

.w {
    fill: #fafafa;
}

svg.chev {
    width: 10px;
    height: 10px;
    stroke-width: 1.6;
}

/* Barre de menus */
.menubar {
    height: 25px;
    flex: none;
    display: flex;
    align-items: center;
    padding: 0 0 2px 14px;
    background: linear-gradient(90deg, #574765, #695170 30%, #62547a 60%, #474a6c 80%, #262c42);
}

.apple {
    width: 16px;
    height: 17px;
    fill: #fff;
    stroke: none;
}

.menubar nav {
    display: flex;
    gap: 19px;
    padding-left: 19px;
    font-size: 13px;
    font-weight: 500;
    color: #fff;
}

.menubar .app {
    font-weight: 700;
}

/* Fenêtre */
.window {
    flex: 1;
    min-height: 0;
    display: flex;
    flex-direction: column;
    border-radius: 9px;
    overflow: hidden;
    background: #e9e9e9;
}

.titlebar {
    position: relative;
    height: 29px;
    flex: none;
    display: flex;
    align-items: center;
    justify-content: center;
    gap: 5px;
    padding-bottom: 2px;
    background: #efeef0;
    border-bottom: 1px solid #bcbcbc;
}

.titlebar h1 {
    font-size: 13px;
    font-weight: 700;
    color: #3c3c3e;
}

.lights {
    position: absolute;
    left: 7px;
    display: flex;
    gap: 8px;
}

.lights button {
    width: 12px;
    height: 12px;
    border-radius: 50%;
    border: 1px solid rgba(0, 0, 0, 0.15);
}

.close {
    background: #fe5650;
}

.mini {
    background: #fdb53b;
}

.full {
    background: #2ac045;
}

.doc {
    width: 14px;
    height: 16px;
}

/* Barres d'outils */
.toolbar, .group {
    display: flex;
    align-items: center;
    gap: 2px;
}

.toolbar {
    height: 35px;
    flex: none;
    padding: 0 0 2px 3px;
    overflow: hidden;
}

.toolbar.second {
    height: 38px;
    padding: 0;
    background: #e1e1e1;
}

.group {
    width: 255px;
    height: 38px;
    padding: 0 0 2px 3px;
    background: #e9e9e9;
}

.grip {
    flex: none;
    width: 1px;
    height: 14px;
    margin-right: 4px;
    background: #a5a5a5;
}

.sep {
    flex: none;
    width: 1px;
    height: 22px;
    margin: 0 4px;
    background: #cfcfcf;
}

.tb {
    flex: none;
    width: 28px;
    height: 28px;
    display: flex;
    align-items: center;
    justify-content: center;
    border-radius: 4px;
}

.mini-tb {
    width: 13px;
}

.mini-tb svg {
    width: 12px;
    height: 12px;
    stroke-width: 1.6;
}

.on {
    background: #b2b3b8;
    box-shadow: inset 0 0 0 1px #a2a3a8;
}

.infobox {
    height: 61px;
    flex: none;
    padding: 3px 0 0 8px;
    background: linear-gradient(#b5b5b5, #b5b5b5) 2px 19px / 2px 23px no-repeat;
}

.infobox p {
    font-size: 9px;
    line-height: 12px;
}

.info-row {
    display: flex;
    align-items: flex-end;
    gap: 2px;
    padding: 9px 0 0 1px;
}

.pill {
    width: 40px;
    height: 18px;
    display: flex;
    align-items: center;
    justify-content: center;
    gap: 5px;
    border-radius: 5px;
    background: #fff;
    box-shadow: 0 0 1px rgba(0, 0, 0, 0.3), 0 1px 1px rgba(0, 0, 0, 0.2);
}

.pill svg.wide {
    width: 20px;
    height: 14px;
}

.pill.on {
    background: #b2b3b8;
}

.pill.on svg {
    width: 16px;
    height: 16px;
}

.pill.big {
    width: 48px;
    height: 28px;
    gap: 9px;
    padding-left: 6px;
}

.pill.big svg:first-child {
    width: 17px;
    height: 17px;
}

/* Zone de travail */
.workspace {
    flex: 1;
    min-height: 0;
    display: flex;
}

.toolbox {
    flex: none;
    width: 46px;
    display: flex;
    flex-direction: column;
    background: #ebebed;
    border-right: 1px solid #dcdcdc;
}

.handle {
    flex: none;
    width: 18px;
    height: 1px;
    margin: 4px 0 2px 13px;
    background: #999;
}

.handle.long {
    width: 70px;
    margin: 4px 0 5px 57px;
}

.tool {
    flex: none;
    width: 44px;
    height: 28px;
    display: flex;
    align-items: center;
    justify-content: center;
    border-radius: 4px;
}

.tool svg {
    width: 30px;
    height: 28px;
}

.toolbox h2 {
    flex: none;
    height: 20px;
    line-height: 20px;
    background: #d0d0d0;
    border-radius: 0 3px 3px 0;
}

.toolbox .first {
    margin: 1px 0;
}

.toolbox .bottom {
    margin: auto 0 1px;
}

.center {
    flex: 1;
    min-width: 0;
    display: flex;
    flex-direction: column;
}

.tabs {
    height: 22px;
    flex: none;
    display: grid;
    grid-template-columns: 33px repeat(3, 1fr) 78px;
    background: #dedede;
}

.tabs svg {
    width: 20px;
    height: 18px;
}

.tabs svg.chev {
    width: 10px;
    height: 10px;
}

.grid-btn {
    border-right: 1px solid #a8a8a8;
}

.tab {
    min-width: 0;
    display: flex;
    align-items: center;
    justify-content: center;
    gap: 1px;
    white-space: nowrap;
    background: #e1e1e1;
    color: #3a3a3c;
}

.tab.active {
    justify-content: flex-end;
    padding-right: 4px;
    background: #fff;
}

.tab:last-of-type {
    border-right: 1px solid #a8a8a8;
}

.nav-btn {
    display: flex;
    align-items: center;
    justify-content: center;
    gap: 4px;
    margin-left: 28px;
    background: #f6f6f6;
}

.nav-btn svg:first-child {
    width: 24px;
}

.canvas {
    position: relative;
    flex: 1;
    min-height: 0;
    background: #fff;
    overflow: hidden;
}

.scene {
    position: absolute;
    inset: 0;
    width: 100%;
    height: 100%;
    stroke: none;
    stroke-width: 1;
}

.pull {
    position: absolute;
    display: flex;
    align-items: center;
    justify-content: center;
    background: #ebebeb;
    border-radius: 3px;
}

.pull::after {
    content: "";
    width: 26px;
    height: 1px;
    background: repeating-linear-gradient(90deg, #999 0 5px, transparent 5px 7px);
}

.pull.top, .pull.foot {
    left: 490px;
    width: 32px;
    height: 15px;
}

.pull.top {
    top: 2px;
}

.pull.foot {
    bottom: 1px;
    background: rgba(220, 220, 220, 0.25);
}

.pull.foot::after {
    background: repeating-linear-gradient(90deg, #ff7a1f 0 5px, transparent 5px 7px);
}

.pull.left {
    left: 1px;
    top: 296px;
    width: 16px;
    height: 32px;
}

.pull.left::after {
    width: 1px;
    height: 26px;
    background: repeating-linear-gradient(#e0874f 0 5px, transparent 5px 7px);
}

/* Palette flottante */
.palette {
    position: absolute;
    top: 0;
    right: 2px;
    width: 185px;
    background: #e9e9e9;
}

.palette header {
    height: 16px;
    display: flex;
    align-items: center;
    padding: 0 0 1px 4px;
    background: #f4f4f4;
    border-bottom: 1px solid #a8a8a8;
    color: #3f3f41;
}

.palette header h2 {
    flex: 1;
    padding-left: 4px;
    text-align: center;
}

.dot {
    width: 9px;
    height: 9px;
    border: 1px solid #bdbdbd;
    border-radius: 50%;
    background: #d8d8d8;
}

.palette-body {
    padding: 3px 3px 4px;
}

.fold {
    height: 22px;
    line-height: 22px;
    margin-bottom: 3px;
    padding-left: 22px;
    position: relative;
    background: #cecece;
    border-radius: 3px;
}

.fold::before {
    content: "";
    position: absolute;
    left: 6px;
    top: 7px;
    border: 4px solid transparent;
    border-top: 7px solid #7d7f84;
    border-bottom: 0;
}

.palette p {
    line-height: 16px;
    margin-bottom: 5px;
}

.palette .spaced {
    margin-top: 9px;
}

.btn {
    display: block;
    width: 100%;
    height: 20px;
    border-radius: 4px;
    background: #fff;
    box-shadow: 0 0 1px rgba(0, 0, 0, 0.35), 0 1px 1px rgba(0, 0, 0, 0.22);
}

.btn:disabled {
    color: #aeaeae;
    background: #f2f2f2;
}

.btn + .btn {
    margin-top: 5px;
}

.count-row {
    height: 37px;
    display: flex;
    align-items: center;
}

svg.solid {
    width: 30px;
    height: 26px;
}

.count-row span {
    flex: 1;
    padding: 0 26px 2px 0;
    text-align: right;
}

.sq {
    flex: none;
    width: 28px;
    height: 28px;
    display: flex;
    align-items: center;
    justify-content: center;
    border-radius: 5px;
    background: #fff;
    box-shadow: 0 0 1px rgba(0, 0, 0, 0.35), 0 1px 1px rgba(0, 0, 0, 0.22);
}

.btn.pick {
    height: 28px;
    display: flex;
    align-items: center;
    gap: 4px;
    padding: 0 2px;
    text-align: left;
}

.pick span {
    flex: 1;
}

.radio {
    height: 28px;
    display: flex;
    align-items: center;
    gap: 4px;
}

.radio input {
    appearance: none;
    width: 12px;
    height: 12px;
    margin: 0;
    border: 1px solid #c4c4c4;
    border-radius: 50%;
    background: #fff;
}

.radio input:checked {
    background: radial-gradient(#222 0 2px, #fff 3px);
}

.btn.run {
    margin: 4px 0 6px;
}

.palette hr {
    height: 1px;
    margin: 8px 0 5px;
    border: 0;
    background: #c6c6c6;
}

/* Barre d'options rapides */
.quickbar {
    height: 20px;
    flex: none;
    display: flex;
    border-bottom: 1px solid #d8d8d8;
}

.quickbar svg {
    width: 18px;
    height: 18px;
}

.quickbar svg.chev {
    width: 10px;
    height: 10px;
}

.nav-group {
    flex: none;
    display: flex;
    padding-right: 2px;
    border-right: 1px solid #cbcbcb;
}

.nav-group button {
    width: 23px;
}

.nav-group + .nav-group {
    padding: 0 2px;
}

.cell {
    flex: 1;
    min-width: 0;
    display: flex;
    align-items: center;
    padding: 0 4px 0 6px;
    border-right: 1px solid #cbcbcb;
}

.cell:last-child {
    border-right: 0;
}

.cell span {
    flex: 1;
    padding-left: 7px;
    text-align: center;
}

.off span {
    color: #a9a9a9;
}

.off .chev {
    stroke: #999;
}

/* Panneau latéral */
.side {
    flex: none;
    width: 184px;
    display: flex;
    flex-direction: column;
    border-left: 1px solid #d8d8d8;
}

.side-label {
    padding-left: 2px;
    line-height: 16px;
}

.side-row {
    display: flex;
    align-items: center;
    gap: 2px;
    padding: 5px 2px 0 3px;
}

.end {
    margin-left: auto;
}

.side-row .end svg:first-child {
    width: 24px;
}

.filter {
    margin-top: 7px;
    padding: 5px 3px 0;
    border-top: 1px solid #cdcdcd;
}

.filter label {
    display: block;
    line-height: 16px;
    margin: 0 0 4px -1px;
}

.select {
    position: relative;
    height: 20px;
}

.select select {
    width: 100%;
    height: 20px;
    appearance: none;
    padding: 0 8px;
    border: 0;
    border-radius: 4px;
    background: #fff;
    box-shadow: 0 0 1px rgba(0, 0, 0, 0.35), 0 1px 1px rgba(0, 0, 0, 0.22);
    font: inherit;
    color: inherit;
}

.select svg {
    position: absolute;
    right: 1px;
    top: 2px;
    width: 16px;
    height: 16px;
    padding: 1px;
    border-radius: 4px;
    background: #0a7aff;
    stroke: #fff;
    stroke-width: 2;
}

.navigator {
    flex: 1;
    min-height: 0;
    display: flex;
    flex-direction: column;
    margin-top: 87px;
    border-top: 1px solid #d4d4d4;
}

.navigator .handle {
    margin-bottom: 0;
}

.maps {
    padding-right: 0;
}

.maps .sep {
    margin: 0 5px;
}

.menu-btn {
    width: 34px;
    height: 21px;
    display: flex;
    align-items: center;
    justify-content: center;
    gap: 4px;
    border-radius: 5px;
    background: #fff;
    box-shadow: 0 0 1px rgba(0, 0, 0, 0.35), 0 1px 1px rgba(0, 0, 0, 0.22);
}

.side-row .menu-btn svg:first-child {
    width: 16px;
    height: 14px;
}

.search {
    flex: none;
    height: 22px;
    display: flex;
    align-items: center;
    gap: 6px;
    margin: 6px 0 3px 2px;
    padding-left: 6px;
    background: #fff;
    border: 1px solid #c8c8c8;
}

.search svg {
    width: 15px;
    height: 15px;
    stroke-width: 1.6;
}

.search input, .prop-inputs input {
    min-width: 0;
    border: 0;
    padding: 0;
    font: inherit;
    color: inherit;
    background: #fff;
    outline: 0;
}

.search input::placeholder {
    color: #b4b4b4;
}

.tree {
    position: relative;
    flex: 1;
    min-height: 0;
    display: flex;
    background: #fff;
}

.tree ul {
    flex: 1;
    min-width: 0;
    overflow: hidden;
    list-style: none;
}

.tree li {
    height: 24px;
    display: flex;
    align-items: center;
    gap: 3px;
    white-space: nowrap;
    color: #000;
}

.tree li svg {
    width: 20px;
    height: 18px;
}

.tree li .tw {
    flex: none;
    width: 14px;
    height: 12px;
    stroke: #6d6d70;
}

.l0 {
    padding-left: 1px;
}

.l1 {
    padding-left: 15px;
}

.l2 {
    padding-left: 29px;
}

.l3 {
    padding-left: 43px;
}

.current {
    background: #d2d2d2;
    font-weight: 700;
}

.wf {
    fill: #fff;
}

.vscroll {
    width: 14px;
    padding: 3px 2px 0 4px;
    background: #fafafa;
    border-left: 1px solid #e4e4e4;
}

.vscroll span {
    display: block;
    height: 37px;
    border-radius: 4px;
    background: #c1c1c1;
}

.hscroll {
    flex: none;
    height: 14px;
    padding: 4px 3px 0;
    background: #fafafa;
}

.hscroll span {
    display: block;
    width: 94px;
    height: 8px;
    border-radius: 4px;
    background: #c1c1c1;
}

.tooltip {
    position: absolute;
    left: 60px;
    top: 88px;
    padding: 0 7px 0 6px;
    line-height: 21px;
    white-space: nowrap;
    background: #f6f6f6;
    box-shadow: 0 0 1px rgba(0, 0, 0, 0.4), 0 4px 10px rgba(0, 0, 0, 0.25);
    color: #333;
}

.side-row.actions {
    padding-top: 3px;
}

.actions svg {
    width: 22px;
}

.actions svg.del {
    width: 20px;
    stroke: #ff3b25;
    stroke-width: 2;
}

.props-head {
    flex: none;
    margin: 4px 1px 0 2px;
}

.props {
    padding: 3px 2px 4px 3px;
}

.prop-inputs {
    display: flex;
    align-items: center;
    gap: 4px;
    height: 18px;
    margin-right: -2px;
}

.props svg {
    width: 16px;
    height: 16px;
}

.prop-inputs svg {
    width: 14px;
    height: 14px;
    margin-right: 1px;
}

.prop-inputs input {
    flex: 1;
    height: 17px;
    padding: 0 4px;
    border-bottom: 1px solid #b5b5b5;
}

.prop-inputs .code {
    flex: none;
    width: 31px;
}

.prop {
    height: 21px;
    display: flex;
    align-items: center;
    gap: 3px;
}

.props .btn {
    margin-top: 3px;
}

/* Barre d'état */
.status {
    height: 22px;
    flex: none;
    display: flex;
    align-items: center;
    padding: 0 11px 1px 6px;
}

.status p {
    flex: 1;
    white-space: nowrap;
}

.status svg {
    width: 18px;
    height: 16px;
}

.bar {
    width: 1px;
    height: 14px;
    margin: 0 10px 0 9px;
    background: #888;
}

.brand {
    font-family: Lato, "Open Sans", sans-serif;
    font-size: 13px;
    font-weight: 400;
    color: #1f2b31;
}

.brand b {
    font-weight: 600;
}
```
